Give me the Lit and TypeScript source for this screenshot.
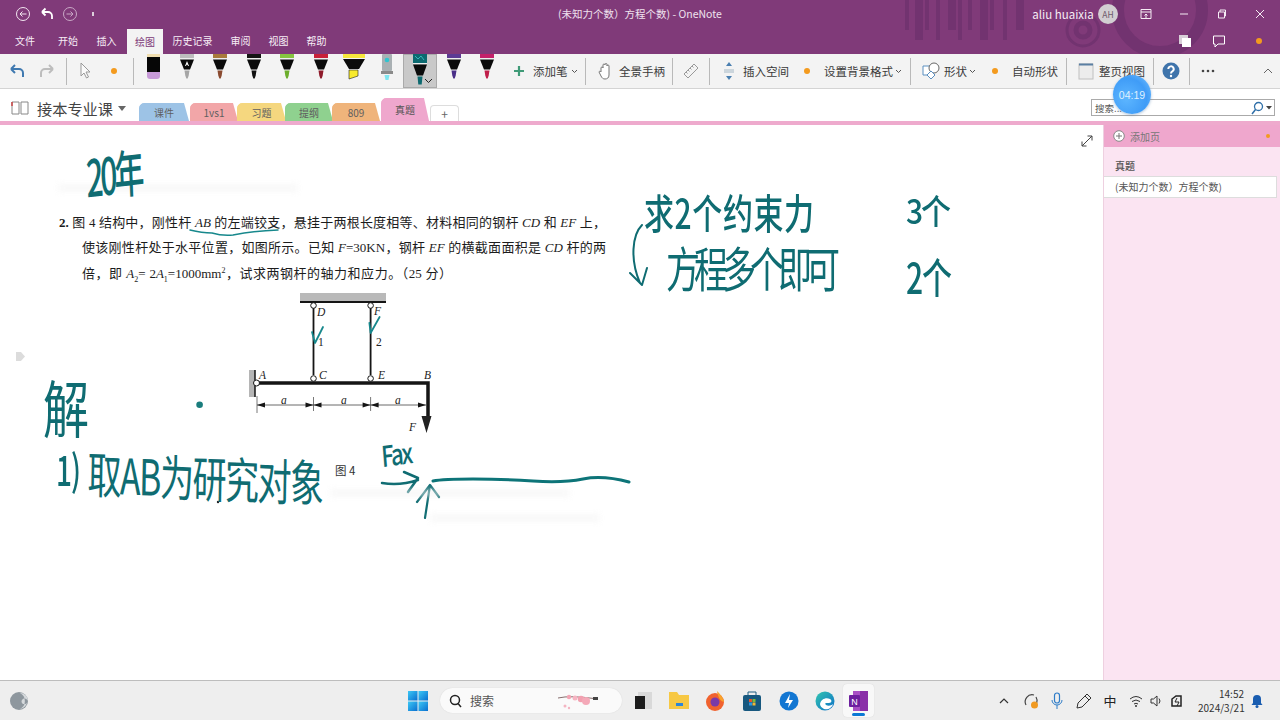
import { LitElement, html, css, svg } from "lit";
import { customElement } from "lit/decorators.js";

const cell = (w: number, c: unknown, cls = "") => html`<div class="cell ${cls}" style="width:${w}px">${c}</div>`;
const ic = (w: number, h: number, body: unknown) => html`<svg width=${w} height=${h} viewBox="0 0 ${w} ${h}" fill="none">${body}</svg>`;
const dot = ic(8, 8, svg`<circle cx="4" cy="4" r="3" fill="#f39a1e"/>`);
const chev = ic(7, 5, svg`<path d="M1 1l2.5 2.5L6 1" stroke="#555"/>`);
const sep = html`<span class="sep"></span>`;

const pen = (band: string, tip: string, label = false) => ic(24, 34, svg`
  <rect x="5" y="0" width="14" height="4" fill=${band}/>
  <rect x="5" y="4" width="14" height="1" fill="#eee"/>
  <path d="M5 5.5h14l-4 10H9z" fill="#0b0b0b"/>
  <path d="M9.5 16.5h5l-.8 5-1 3h-1.4l-1-3z" fill=${tip}/>
  ${label ? svg`<path d="M12 7l-2 5h1l.5-1.3h1l.5 1.3h1z" fill="#fff"/>` : ""}`);

const pens = [
  ic(24, 34, svg`<rect x="5" y="0" width="13" height="3" fill="#f0deb0"/><rect x="5" y="3" width="13" height="15" fill="#060606"/><path d="M5 18h13v4a3 3 0 0 1-3 3H8a3 3 0 0 1-3-3z" fill="#c79ad8"/>`),
  pen("#bdbdbd", "#a5a5a5", true),
  pen("#a87a3c", "#8a4a30"),
  pen("#141414", "#111"),
  pen("#86c440", "#6cae2c"),
  pen("#c8203a", "#8e1a2a"),
  ic(26, 34, svg`<rect x="2" y="0" width="22" height="4" fill="#f7e73c"/><path d="M2 5h22l-6 10H8z" fill="#0b0b0b"/><path d="M8 16h9v6l-9 3z" fill="#f8ea2c" stroke="#222" stroke-width=".6"/>`),
  ic(16, 34, svg`<rect x="3" y="0" width="10" height="17" rx="1" fill="#a9b0b3"/><circle cx="8" cy="6" r="2.3" fill="#2fc4d0"/><rect x="2" y="17" width="12" height="3" fill="#8a8a8a"/><path d="M5.5 21h5l-1 5h-3z" fill="#7fe6f0"/>`),
];
const pens2 = [pen("#5c3a94", "#4a2f88"), pen("#c4206a", "#c01e4a")];
const selPen = ic(24, 34, svg`<rect x="5" y="0" width="14" height="9" fill="#0c6a70"/><path d="M7 2l3 3 3-3 3 4" stroke="#4cc" stroke-width=".8"/><rect x="5" y="9" width="14" height="1" fill="#eee"/><path d="M5 10.5h14l-4 11H9z" fill="#0b0b0b"/><path d="M9.5 22.5h5l-.8 8h-3.4z" fill="#0e6a70"/>`);

const sysIcon = {
  back: ic(16, 16, svg`<circle cx="8" cy="8" r="6.5" stroke="#f2e6f0"/><path d="M11.5 8H5m2.5-2.5L5 8l2.5 2.5" stroke="#f2e6f0"/>`),
  fwd: ic(16, 16, svg`<circle cx="8" cy="8" r="6.5" stroke="#c9a8c6"/><path d="M4.5 8H11M8.5 5.5L11 8l-2.5 2.5" stroke="#c9a8c6"/>`),
  undo: ic(16, 16, svg`<path d="M3 6l3.5-3.5M3 6l3.5 3.5M3 6h6a4 4 0 0 1 4 4v3" stroke="#fff" stroke-width="1.8"/>`),
};

@customElement("app-root")
export class AppRoot extends LitElement {
  static styles = css`
    :host { display:block; width:1280px; height:720px; overflow:hidden; position:relative; background:#fff;
      font-family:"Noto Sans CJK SC","Liberation Sans",sans-serif; color:#333; }
    .cell { display:flex; align-items:center; justify-content:center; flex:none; height:100%; white-space:nowrap; }
    .cell.left { justify-content:flex-start; }
    .cell.top { align-items:flex-start; }
    svg { display:block; flex:none; }

    .head { background:#803a79; position:relative; height:54px; overflow:hidden; }
    .decor { position:absolute; left:0; top:0; }
    .title { height:27px; display:flex; align-items:center; position:relative; color:#f5ecf4; font-size:10.5px; }
    .doc { position:absolute; left:558px; top:7px; line-height:14px; color:#efe2ee; white-space:nowrap; }
    .user { font-size:11.5px; }
    .tabs { height:27px; display:flex; position:relative; color:#f7eef6; font-size:10px; }
    .tabs .on { background:#f3f3f3; color:#803a79; height:25px; margin-top:2px; }
    .spacer { flex:1; }
    .avatar { width:20px; height:20px; border-radius:50%; background:#d2ced2; color:#6d5a6b; font-size:8.5px; display:flex; align-items:center; justify-content:center; }
    .mini { width:2px; height:4px; background:#dcd0db; }

    .ribbon { height:34px; background:#f3f3f3; border-bottom:1px solid #d4d4d4; display:flex; font-size:11.5px; color:#3a3a3a; }
    .sep { width:1px; height:27px; background:#b9b9b9; display:block; }
    .sel { background:#c9c9c9; box-shadow:inset 0 0 0 1px #aaa; position:relative; }
    .selchev { position:absolute; right:4px; bottom:4px; }

    .sections { height:32px; display:flex; align-items:flex-end; position:relative; background:#fff; }
    .nb { display:flex; align-items:center; align-self:center; margin:6px 0 0 11px; width:128px; flex:none; }
    .nbname { font-size:15.2px; color:#444; margin:0 5px 0 8px; white-space:nowrap; }
    .caret { width:0; height:0; border-left:4px solid transparent; border-right:4px solid transparent; border-top:5px solid #666; }
    .tab { height:18px; width:48px; border-radius:5px 5px 0 0; margin-right:-1px; font-size:10px; color:#5f5f5f; display:flex; align-items:center; justify-content:center; flex:none; clip-path:polygon(0 100%,0 3px,3px 0,calc(100% - 5px) 0,100% 100%); }
    .t1 { background:#9dc3e6; width:50px; margin-right:1px; } .t2 { background:#f2a6a8; } .t3 { background:#f5d77f; width:49px; } .t4 { background:#8fd18f; } .t5 { background:#efb47b; }
    .t6 { background:#efa7cd; height:23px; margin-left:2px; color:#555; }
    .tplus { background:#fff; border:1px solid #ddd; border-bottom:0; height:15px; width:27px; margin-left:2px; border-radius:4px 4px 0 0; color:#666; font-size:12px; display:flex; align-items:center; justify-content:center; }
    .search { position:absolute; left:1091px; top:10px; width:184px; height:17px; border:1px solid #aaa; background:#fff; font-size:9.5px; color:#555; display:flex; align-items:center; padding-left:3px; box-sizing:border-box; }
    .timer { position:absolute; left:1113px; top:75px; width:38px; height:39px; border-radius:50%; background:radial-gradient(circle at 35% 60%,#5db6ff,#3f9cf7 60%,#7cc4ff); color:#dff0ff; font-size:10.5px; display:flex; align-items:center; justify-content:center; box-shadow:0 1px 3px rgba(70,120,170,.45); z-index:3; font-family:"Liberation Sans",sans-serif; }
    .pink { height:4px; background:#eeaacd; }

    .main { height:555px; display:flex; }
    .canvas { width:1103px; flex:none; position:relative; overflow:hidden; background:#fff; }
    .side { flex:1; background:#fbe4f2; border-left:1px solid #eed0e0; font-size:10px; color:#555; }
    .sidehead { height:22px; background:#efa7cd; display:flex; align-items:center; padding-left:9px; color:#777; }
    .sidehead span { margin-left:5px; flex:1; }
    .sidehead svg:last-child { margin-right:9px; }
    .sec { margin:12px 0 0 11px; height:17px; line-height:14px; color:#555; font-weight:500; }
    .page { height:20px; background:#fff; border:1px solid #ddd; border-left:0; padding-left:11px; box-sizing:content-box; line-height:19px; white-space:nowrap; width:161px; }

    .print { position:absolute; left:0; top:0; font-family:"Liberation Serif","Noto Sans CJK SC",serif; color:#1c1c1c; font-size:13px; font-weight:400; }
    .print div { position:absolute; white-space:nowrap; line-height:20px; }
    .print i { font-family:"Liberation Serif",serif; }
    .print b { font-weight:700; }
    .l1 { left:59px; top:88px; width:547px; text-align-last:justify; }
    .l2 { left:82px; top:113px; width:524px; text-align-last:justify; }
    .l3 { left:82px; top:139px; width:370px; text-align-last:justify; }
    sub,sup { font-size:8px; line-height:0; }
    .lab { position:absolute; font-family:"Liberation Serif",serif; font-size:11.5px; line-height:12px; font-style:italic; color:#222; }
    .up { font-style:normal; }
    .d1{left:317px;top:181px}.f1{left:374px;top:180px}.n1{left:318px;top:211px}.n2{left:376px;top:211px}
    .la{left:259px;top:244px}.lc{left:319px;top:244px}.le{left:378px;top:244px}.lb{left:424px;top:244px}
    .a1{left:281px;top:269px}.a2{left:341px;top:269px}.a3{left:395px;top:269px}.lf{left:409px;top:296px}
    .fig { position:absolute; left:335px; top:338px; font-size:11.5px; color:#333; line-height:14px; white-space:nowrap; }
    .fade { position:absolute; background:#f3f3f3; filter:blur(3px); opacity:.7; height:6px; }
    .fa{left:58px;top:60px;width:240px}.fb{left:330px;top:365px;width:240px}.fc{left:430px;top:390px;width:170px}
    .nub { position:absolute; left:16px; top:227px; width:9px; height:9px; background:#dcdcdc; clip-path:polygon(0 0,55% 0,100% 50%,55% 100%,0 100%); }
    .expand { position:absolute; left:1081px; top:10px; }

    .ink { position:absolute; font-family:"Noto Sans CJK SC",sans-serif; color:#0f6c72; font-weight:500; white-space:nowrap; line-height:1; transform-origin:0 0; }
    .i20 { left:85px; top:25px; font-size:30px; letter-spacing:-3px; transform:scaleY(1.7) rotate(-4deg); }
    .iq { left:644px; top:66px; font-size:30px; letter-spacing:.6px; transform:scaleY(1.35); }
    .ifc { left:666px; top:119px; font-size:34px; letter-spacing:-6px; font-weight:400; transform:scaleY(1.4); }
    .i3 { left:906px; top:67px; font-size:30px; letter-spacing:-2px; transform:scaleY(1.15); }
    .i2 { left:906px; top:130px; font-size:30px; letter-spacing:-1px; transform:scaleY(1.4); }
    .ijie { left:43px; top:250px; font-size:46px; font-weight:400; transform:scaleY(1.35); }
    .i1 { left:56px; top:322px; font-size:28px; letter-spacing:-1px; transform:scaleY(1.5); }
    .iqu { left:88px; top:323px; font-size:34px; letter-spacing:-1.5px; font-weight:400; transform:scaleY(1.45) rotate(1.5deg); }
    .ifax { left:380px; top:315px; font-size:22px; letter-spacing:-2px; transform:scaleY(1.3) rotate(-6deg); }

    .taskbar { height:39px; border-top:1px solid #bdbdbd; background:#eeeeee; display:flex; position:relative; font-size:12px; }
    .pill { width:182px; height:25px; margin-top:7px; background:#fafafa; border-radius:13px; display:flex; align-items:center; padding-left:9px; box-sizing:border-box; color:#555; flex:none; box-shadow:0 0 1px #ccc; }
    .pill span { margin-left:8px; width:87px; }
    .active { background:#f8f8f8; border-radius:4px; height:33px; margin-top:3px; width:31px; box-shadow:0 0 1px #ccc; position:relative; display:flex; align-items:center; justify-content:center; }
    .bar { position:absolute; left:9px; bottom:1px; width:13px; height:3px; border-radius:2px; background:#0a78d4; }
    .clock { font-size:10px; line-height:14px; text-align:right; color:#333; width:46px; margin-top:6px; }
    .ime { font-size:13px; color:#222; }
  `;

  render() {
    return html`
      <div class="head">
        <span class="decor">${ic(1280, 54, svg`<g fill="#723370">
          ${[905,915,925,936,948,958,968,980,990,1003,1016].map((x, i) => svg`<rect x=${x} y="0" width=${i % 3 === 1 ? 8 : 4} height=${i % 2 ? 40 : 30}/>`)}
          </g>
          <g stroke="#723370" fill="none"><circle cx="1083" cy="30" r="7" stroke-width="5"/><circle cx="1083" cy="30" r="16" stroke-width="3"/><circle cx="1160" cy="10" r="42" stroke-width="12"/></g>`)}</span>
        ${this.renderHeadRows()}
      </div>
      ${this.renderBody()}
    `;
  }

  renderHeadRows() {
    return html`
      <div class="title">
        ${cell(11, "")}${cell(24, sysIcon.back)}${cell(24, sysIcon.undo)}${cell(22, sysIcon.fwd)}${cell(23, html`<span class="mini"></span>`)}
        <span class="doc">(未知力个数）方程个数) - OneNote</span>
        <span class="spacer"></span>
        ${cell(52, html`<span class="user">aliu huaixia</span>`)}
        ${cell(38, html`<span class="avatar">AH</span>`)}
        ${cell(38, ic(12, 12, svg`<path d="M1 1.5h10v9H1zM1 4h10M6 10V6M4.5 7.5L6 6l1.5 1.5" stroke="#f5ecf4"/>`))}
        ${cell(38, ic(10, 10, svg`<path d="M1 5h8" stroke="#f5ecf4"/>`))}
        ${cell(38, ic(10, 10, svg`<path d="M1.5 3h6v6h-6zM3 3V1h5.500v6H7.500" stroke="#f5ecf4"/>`))}
        ${cell(38, ic(10, 10, svg`<path d="M1 1l8 8M9 1L1 9" stroke="#f5ecf4"/>`))}
        ${cell(1, "")}
      </div>
      <div class="tabs">
        ${cell(50, "文件")}${cell(36, "开始")}${cell(41, "插入")}
        ${cell(36, "绘图", "on")}${cell(59, "历史记录")}${cell(37, "审阅")}${cell(39, "视图")}${cell(37, "帮助")}
        <span class="spacer"></span>
        ${cell(28, ic(14, 14, svg`<rect x="1" y="1" width="9" height="9" fill="#d8cfd8"/><rect x="4" y="4" width="9" height="9" fill="#fff"/>`))}
        ${cell(40, ic(14, 14, svg`<path d="M1.500 2h11v8H6l-3 3v-3H1.500z" stroke="#fff"/>`))}
        ${cell(40, dot)}
        ${cell(1, "")}
      </div>`;
  }

  renderBody() {
    return html`
      <div class="ribbon">
        ${cell(34, ic(18, 16, svg`<path d="M3 6l4-4M3 6l4 4M3 6h8a4 4 0 0 1 4 4v4" stroke="#3f79b0" stroke-width="2"/>`))}
        ${cell(26, ic(18, 16, svg`<path d="M15 6l-4-4M15 6l-4 4M15 6H7a4 4 0 0 0-4 4v4" stroke="#bdbdbd" stroke-width="2"/>`))}
        ${cell(13, sep)}
        ${cell(24, ic(12, 18, svg`<path d="M2 1v13l3-3 2.500 5 2-1-2.500-5h4z" stroke="#999" fill="#fafafa"/>`))}
        ${cell(34, dot)}
        ${cell(5, sep)}
        ${cell(35, pens[0], "top")}${cell(32, pens[1], "top")}${cell(34, pens[2], "top")}${cell(33, pens[3], "top")}
        ${cell(34, pens[4], "top")}${cell(33, pens[5], "top")}${cell(33, pens[6], "top")}${cell(33, pens[7], "top")}
        ${cell(34, html`${selPen}<span class="selchev">${ic(9, 6, svg`<path d="M1 1l3.500 3.500L8 1" stroke="#222"/>`)}</span>`, "top sel")}
        ${cell(33, pens2[0], "top")}${cell(34, pens2[1], "top")}
        ${cell(29, ic(12, 12, svg`<path d="M6 1v10M1 6h10" stroke="#3f9a77" stroke-width="2.200"/>`))}
        ${cell(36, "添加笔", "left")}${cell(10, chev)}${cell(12, sep)}
        ${cell(28, ic(14, 18, svg`<path d="M3 10V6a1 1 0 0 1 2 0V3a1 1 0 0 1 2 0v-.5a1 1 0 0 1 2 0V4a1 1 0 0 1 2 0v9c0 3-2 4-4 4s-3-1-4-3l-2-4c0-1 1.500-1 2 0z" stroke="#777" fill="#fff"/>`))}
        ${cell(47, "全景手柄", "left")}${cell(12, sep)}
        ${cell(25, ic(16, 16, svg`<path d="M11 1l4 4L5 15l-4-4zM9 3l1.500 1.500M7 5l1.500 1.500M5 7l1.500 1.500M3 9l1.500 1.500" stroke="#999"/>`))}
        ${cell(12, sep)}
        ${cell(28, ic(12, 20, svg`<path d="M6 1l3 4H3zM6 19l3-4H3z" fill="#4a7fb0"/><rect x="1" y="8" width="10" height="4" fill="#cbd5dc"/>`))}
        ${cell(47, "插入空间", "left")}${cell(34, dot)}
        ${cell(69, "设置背景格式", "left")}${cell(10, chev)}${cell(14, sep)}
        ${cell(27, ic(18, 18, svg`<path d="M1 4h8v9H1z" stroke="#5b8fc0" fill="#fff"/><circle cx="12" cy="6" r="5" stroke="#666" fill="#fff"/><path d="M9 9l4 4-4 4-4-4z" stroke="#5b8fc0" fill="#fff"/>`))}
        ${cell(23, "形状", "left")}${cell(10, chev)}${cell(35, dot)}
        ${cell(47, "自动形状", "left")}${cell(14, sep)}
        ${cell(26, ic(16, 17, svg`<rect x="1" y="1" width="14" height="15" fill="#ececec" stroke="#c0c0c0"/><path d="M1 1.500h14" stroke="#5a7fa3" stroke-width="2"/>`))}
        ${cell(47, "整页视图", "left")}${cell(14, sep)}
        ${cell(22, ic(18, 18, svg`<circle cx="9" cy="9" r="8.500" fill="#3f74ab"/><path d="M6.300 7a2.700 2.700 0 1 1 4 2.400c-.9.5-1.300 1-1.300 2" stroke="#fff" stroke-width="2"/><circle cx="9" cy="14" r="1.200" fill="#fff"/>`))}
        ${cell(14, sep)}
        ${cell(24, ic(14, 4, svg`<circle cx="2" cy="2" r="1.300" fill="#444"/><circle cx="7" cy="2" r="1.300" fill="#444"/><circle cx="12" cy="2" r="1.300" fill="#444"/>`))}
        <span class="spacer"></span>
        ${cell(24, ic(10, 6, svg`<path d="M1 5l4-4 4 4" stroke="#666"/>`))}
      </div>

      <div class="sections">
        <div class="nb">
          ${ic(18, 16, svg`<path d="M1 2h7v12H1zM10 2h7v12h-7z" stroke="#888" fill="#fff"/><path d="M1 2v4" stroke="#c44" stroke-width="1.500"/>`)}
          <span class="nbname">接本专业课</span><span class="caret"></span>
        </div>
        <div class="tab t1">课件</div><div class="tab t2">1vs1</div><div class="tab t3">习题</div><div class="tab t4">提纲</div><div class="tab t5">809</div><div class="tab t6">真题</div>
        <div class="tplus">+</div>
        <div class="search"><span class="spacer">搜索...</span>
          ${ic(14, 14, svg`<circle cx="8.500" cy="5.500" r="4" stroke="#2f6fa8" stroke-width="1.300"/><path d="M5.500 8.500L2 13" stroke="#2f6fa8" stroke-width="1.500"/>`)}
          ${cell(10, ic(6, 4, svg`<path d="M0 0h6L3 3.500z" fill="#444"/>`))}
        </div>
      </div>
      <div class="timer">04:19</div>
      <div class="pink"></div>

      <div class="main">
        <div class="canvas">
          <div class="fade fa"></div><div class="fade fb"></div><div class="fade fc"></div>
          <div class="print">
            <div class="l1"><b>2.</b> 图 4 结构中，刚性杆 <i>AB</i> 的左端铰支，悬挂于两根长度相等、材料相同的钢杆 <i>CD</i> 和 <i>EF</i> 上，</div>
            <div class="l2">使该刚性杆处于水平位置，如图所示。已知 <i>F</i>=30KN，钢杆 <i>EF</i> 的横截面面积是 <i>CD</i> 杆的两</div>
            <div class="l3">倍，即 <i>A</i><sub>2</sub>= 2<i>A</i><sub>1</sub>=1000mm<sup>2</sup>，试求两钢杆的轴力和应力。（25 分）</div>
          </div>

          ${ic(1103, 555, svg`<g transform="translate(0,-125)" fill="none" stroke="#151515">
            <rect x="300" y="293" width="86" height="8" fill="#b9b9b9" stroke="none"/>
            <path d="M300 302h86" stroke-width="2"/>
            <path d="M313.500 308V375M370.600 308V375" stroke-width="1.800"/>
            <circle cx="313.500" cy="305.500" r="2.800" fill="#fff"/><circle cx="370.600" cy="305.500" r="2.800" fill="#fff"/>
            <rect x="249" y="370" width="6" height="27" fill="#b5b5b5" stroke="none"/>
            <path d="M255 370v27" stroke-width="1.500"/>
            <path d="M256 383H428V417" stroke-width="3.500"/>
            <path d="M421.500 416h10l-5 17z" fill="#222" stroke="none"/>
            <circle cx="256.500" cy="383" r="3" fill="#fff"/><circle cx="313.500" cy="378.500" r="2.800" fill="#fff"/><circle cx="370.600" cy="378.500" r="2.800" fill="#fff"/>
            <path d="M257 396v17M313.500 397v14M370.600 397v14" stroke-width=".8" stroke="#555"/>
            <path d="M257 405h169" stroke-width=".8" stroke="#444"/>
            ${[[257,1],[313.500,-1],[313.500,1],[370.600,-1],[370.600,1],[426,-1]].map(([x,d]) => svg`<path d="M${x} 405l${d*8} -2.500v5z" fill="#151515" stroke="none"/>`)}
          </g>
          <g transform="translate(0,-125)" fill="none" stroke="#0f6c72" stroke-linecap="round" stroke-linejoin="round">
            <path d="M312 332l3 11 8-16M369.400 323l1.200 10 9-16" stroke-width="1.800" stroke="#17888c"/>
            <path d="M190 230q12 3 22 3 10 3 21 2 20-4 45-5" stroke-width="1.500" stroke="#17888c"/>
            <path d="M642 225c-10 10-12 35-2 58M630 273l12 12 5-17" stroke-width="2"/>
            <path d="M382 483q18 3 36-3M404 472l14 6-10 14" stroke-width="2.500"/>
            <path d="M425 518l5-33M417 502l13-17 9 12" stroke-width="2.200"/>
            <path d="M433 481q10-2 40-2t60 2 50-2 46 3" stroke-width="3" stroke="#0d7478"/>
            <circle cx="199.600" cy="404.700" r="3.300" fill="#1a7d7d" stroke="none"/>
            <circle cx="218" cy="502" r="1.200" fill="#222" stroke="none"/>
          </g>`)}

          <span class="lab d1">D</span><span class="lab f1">F</span><span class="lab up n1">1</span><span class="lab up n2">2</span>
          <span class="lab la">A</span><span class="lab lc">C</span><span class="lab le">E</span><span class="lab lb">B</span>
          <span class="lab a1">a</span><span class="lab a2">a</span><span class="lab a3">a</span><span class="lab lf">F</span>
          <span class="fig">图 4</span>
          <span class="nub"></span>
          <span class="expand">${ic(12, 12, svg`<path d="M1 11L11 1M6.500 1H11v4.500M1 6.500V11h4.500" stroke="#444"/>`)}</span>

          <span class="ink i20">20年</span>
          <span class="ink iq">求2个约束力</span>
          <span class="ink ifc">方程多个即可</span>
          <span class="ink i3">3个</span>
          <span class="ink i2">2个</span>
          <span class="ink ijie">解</span>
          <span class="ink i1">1)</span>
          <span class="ink iqu">取AB为研究对象</span>
          <span class="ink ifax">Fax</span>
        </div>
        <div class="side">
          <div class="sidehead">
            ${ic(12, 12, svg`<circle cx="6" cy="6" r="5.300" fill="#fff" stroke="#888"/><path d="M6 3v6M3 6h6" stroke="#777"/>`)}
            <span>添加页</span>${ic(6, 6, svg`<circle cx="3" cy="3" r="2" fill="#f39a1e"/>`)}
          </div>
          <div class="sec">真题</div>
          <div class="page">(未知力个数）方程个数)</div>
        </div>
      </div>

      <div class="taskbar">
        ${cell(38, ic(20, 20, svg`<circle cx="10" cy="10" r="9" fill="#8e979e"/><path d="M11 2a8 8 0 0 1 8 8c-1-2-3-3-5-2-2 1-2 4 0 5 2 0 3 0 4-1a9 9 0 0 1-7 6 9 9 0 0 0 0-16z" fill="#d5d9dc"/>`))}
        ${cell(370, "")}
        ${cell(20, ic(20, 20, svg`<defs><linearGradient id="w" x1="0" y1="0" x2="1" y2="1"><stop offset="0" stop-color="#3cc8f5"/><stop offset="1" stop-color="#0a6fd0"/></linearGradient></defs><rect x="0" y="0" width="9.500" height="9.500" fill="url(#w)"/><rect x="10.500" y="0" width="9.500" height="9.500" fill="url(#w)"/><rect x="0" y="10.500" width="9.500" height="9.500" fill="url(#w)"/><rect x="10.500" y="10.500" width="9.500" height="9.500" fill="url(#w)"/>`))}
        ${cell(12, "")}
        <div class="pill">
          ${ic(13, 14, svg`<circle cx="6" cy="6" r="4.500" stroke="#222" stroke-width="1.500"/><path d="M9 9.500l3 3.500" stroke="#222" stroke-width="1.500"/>`)}
          <span>搜索</span>
          ${ic(42, 20, svg`<path d="M1 7q12-3 40 1" stroke="#6a4a4a" stroke-width=".8"/><circle cx="12" cy="6" r="2.200" fill="#f4a5b5"/><circle cx="18" cy="7" r="2.500" fill="#f6b4c2"/><circle cx="24" cy="8" r="3.200" fill="#f2a0b0"/><circle cx="29" cy="10" r="4" fill="#f4a9b8"/><circle cx="8" cy="15" r="1.500" fill="#f4b5c2"/><circle cx="12" cy="17" r="1.200" fill="#f4b5c2"/><rect x="36" y="6" width="5" height="3" fill="#444"/>`)}
        </div>
        ${cell(3, "")}
        ${cell(36, ic(17, 18, svg`<rect x="3" y="0" width="14" height="17" fill="#d9d9d9"/><rect x="0" y="4" width="10" height="13" fill="#1c1c1c"/>`))}
        ${cell(36, ic(20, 19, svg`<path d="M0 1h8l2 3h10v14H0z" fill="#f7c844"/><rect x="7" y="12" width="7" height="3" fill="#2d86d8"/>`))}
        ${cell(36, ic(20, 20, svg`<circle cx="10" cy="11" r="9" fill="#f0622f"/><path d="M12 0c3 3 6 6 7 11-4-1-6-5-7-11z" fill="#f8a32b"/><circle cx="10" cy="11" r="4.500" fill="#7a3aa8"/>`))}
        ${cell(37, ic(20, 22, svg`<path d="M6 5V2h8v3" stroke="#1f5f82"/><rect x="1" y="5" width="18" height="16" rx="2" fill="#17587f"/><rect x="7" y="9" width="3" height="3" fill="#e8542c"/><rect x="10.500" y="9" width="3" height="3" fill="#7dbb3a"/><rect x="7" y="12.500" width="3" height="3" fill="#2d96e0"/><rect x="10.500" y="12.500" width="3" height="3" fill="#f2b632"/>`))}
        ${cell(37, ic(20, 20, svg`<circle cx="10" cy="10" r="9.500" fill="#1276d2"/><path d="M11 3l-5 9h4l-1 5 5-8h-4z" fill="#fff"/>`))}
        ${cell(36, ic(20, 20, svg`<defs><linearGradient id="e" x1="0" y1="0" x2="1" y2="1"><stop offset="0" stop-color="#33c6b0"/><stop offset="1" stop-color="#0d6fc8"/></linearGradient></defs><circle cx="10" cy="10" r="9.500" fill="url(#e)"/><path d="M5 13c1-5 6-7 10-5 2 1 2 4-1 4h-3c-1 0-1 1 0 2 2 1 5 1 7-1-1 4-5 6-9 5-2-1-4-3-4-5z" fill="#fff"/>`))}
        <div class="active">
          ${ic(20, 20, svg`<rect x="4" y="0" width="15" height="20" fill="#a84fc4"/><rect x="11" y="0" width="8" height="20" fill="#8a2fa8"/><rect x="0" y="4" width="11" height="12" rx="1" fill="#6d1f9e"/><text x="2.300" y="13.500" font-size="9" font-family="Liberation Sans" fill="#fff">N</text>`)}
          <span class="bar"></span>
        </div>
        <span class="spacer"></span>
        ${cell(26, ic(10, 6, svg`<path d="M1 5l4-4 4 4" stroke="#333" stroke-width="1.200"/>`))}
        ${cell(27, ic(16, 18, svg`<path d="M3 13A7 7 0 0 1 11 3M13 5a7 7 0 0 1-3 10" stroke="#444" stroke-width="1.200"/><circle cx="11.500" cy="13" r="3.500" fill="#f09a22"/>`))}
        ${cell(26, ic(12, 18, svg`<rect x="3.500" y="1" width="5" height="10" rx="2.500" stroke="#2d7cc8" stroke-width="1.200"/><path d="M1 8a5 5 0 0 0 10 0M6 13v4" stroke="#2d7cc8"/>`))}
        ${cell(27, ic(16, 16, svg`<path d="M11 1l4 4-9 9-5 1 1-5zM9 3l4 4" stroke="#333"/>`))}
        ${cell(26, html`<span class="ime">中</span>`)}
        ${cell(26, ic(14, 12, svg`<path d="M1 4q6-5 12 0M3 6.500q4-3 8 0M5 9q2-1.500 4 0" stroke="#333"/><circle cx="7" cy="11" r="1" fill="#333"/>`))}
        ${cell(14, ic(13, 12, svg`<path d="M1 4h2.500L7 1v10L3.500 8H1zM9 3.500q2 2.500 0 5" stroke="#333"/>`))}
        ${cell(28, ic(14, 14, svg`<path d="M2 12V5l4-3h5v10z" stroke="#222" stroke-width="1.500"/><path d="M7 4L5 8h4l-2 4" stroke="#222"/>`))}
        ${cell(7, "")}
        <div class="clock">14:52<br />2024/3/21</div>
        ${cell(26, ic(12, 14, svg`<path d="M6 1a4 4 0 0 0-4 4v4l-1.500 2h11L10 9V5a4 4 0 0 0-4-4z" fill="#1a5db0"/><circle cx="6" cy="12.500" r="1.500" fill="#1a5db0"/>`))}
        ${cell(10, "")}
      </div>
    `;
  }
}
